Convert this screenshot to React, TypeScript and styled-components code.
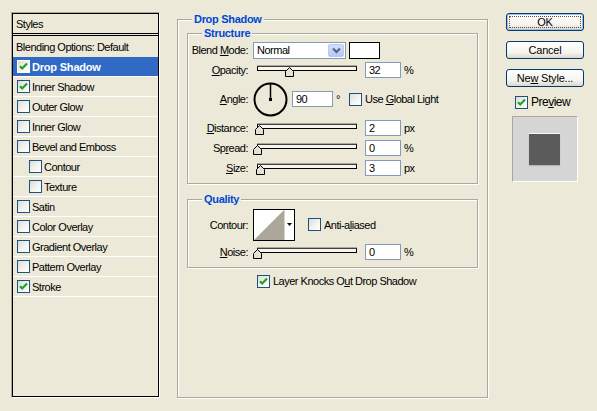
import React from 'react';
import styled, { createGlobalStyle } from 'styled-components';

// ============================================================
// GLOBAL
// ============================================================

const GlobalStyle = createGlobalStyle`
  * { box-sizing: border-box; }
  html, body {
    margin: 0;
    padding: 0;
    background: #ece9d8;
  }
  body {
    font-family: "Liberation Sans", Arial, sans-serif;
    font-size: 11px;
    letter-spacing: -0.5px;
    color: #000;
  }
  u { text-underline-offset: 1px; }
`;

// ============================================================
// STYLED COMPONENTS
// ============================================================

const Dialog = styled.div`
  display: flex;
  align-items: flex-start;
  width: 597px;
  height: 411px;
  padding: 12px 0 0 11px;
  background: #ece9d8;
`;

/* ---- styles list ---- */

const StylesPanel = styled.div`
  display: flex;
  width: 149px;
  height: 386px;
  border: 1px solid;
  border-color: #aca899 #fff #fff #aca899;
`;

const StylesInner = styled.div`
  flex: 1;
  display: flex;
  flex-direction: column;
  border: 1px solid #000;
`;

const PanelHeader = styled.div`
  height: 22px;
  padding: 4px 0 0 3px;
  border-bottom: 3px double #000;
`;

const BlendingRow = styled.div`
  display: flex;
  align-items: center;
  height: 21px;
  padding-left: 3px;
`;

const StyleItem = styled.div<{ $selected?: boolean; $indent?: boolean }>`
  display: flex;
  align-items: center;
  gap: 2px;
  height: 20px;
  padding-left: ${({ $indent }) => ($indent ? 16 : 4)}px;
  border-bottom: 1px solid #fff;
  background: ${({ $selected }) => ($selected ? '#316ac5' : 'transparent')};
  color: ${({ $selected }) => ($selected ? '#fff' : '#000')};
  font-weight: ${({ $selected }) => ($selected ? 'bold' : 'normal')};
  letter-spacing: ${({ $selected }) => ($selected ? '-0.2px' : 'inherit')};
`;

/* ---- checkbox ---- */

const CheckBoxBox = styled.span<{ $light?: boolean }>`
  display: inline-flex;
  align-items: center;
  justify-content: center;
  flex: none;
  width: 13px;
  height: 13px;
  border: 1px solid ${({ $light }) => ($light ? '#fff' : '#1c5180')};
  background: linear-gradient(135deg, #dcdcd7 0%, #f3f3ef 55%, #fff 100%);
`;

/* ---- group boxes ---- */

const GroupBox = styled.fieldset<{ $w?: number; $h?: number; $pad?: number }>`
  margin: 0;
  min-width: 0;
  width: ${({ $w }) => ($w ? `${$w}px` : 'auto')};
  height: ${({ $h }) => ($h ? `${$h}px` : 'auto')};
  padding: 0 ${({ $pad }) => $pad ?? 0}px 5px;
  border: 1px solid #aca899;
  box-shadow: 1px 1px 0 #fff, inset 1px 1px 0 #fff;
`;

const OuterGroup = styled(GroupBox)`
  margin-left: 17px;
  padding-bottom: 0;
`;

const InnerGroup = styled(GroupBox)<{ $gap?: number }>`
  margin-top: ${({ $gap }) => $gap ?? 0}px;
`;

const GroupTitle = styled.legend<{ $indent: number }>`
  margin-left: ${({ $indent }) => $indent}px;
  padding: 0 2px;
  line-height: 14px;
  font-weight: bold;
  letter-spacing: -0.3px;
  color: #0046d5;
  background: #ece9d8;
`;

/* ---- form rows ---- */

const FieldRow = styled.div<{ $h?: number; $top?: number }>`
  display: grid;
  grid-template-columns: 60px 1fr;
  column-gap: 5px;
  align-items: center;
  height: ${({ $h }) => $h ?? 20}px;
  margin-top: ${({ $top }) => $top ?? 0}px;
`;

const FieldLabel = styled.label`
  text-align: right;
  white-space: nowrap;
`;

const Controls = styled.div`
  display: flex;
  align-items: center;
`;

const SelectBox = styled.div`
  display: flex;
  align-items: center;
  width: 93px;
  height: 17px;
  padding: 1px 1px 1px 3px;
  border: 1px solid #7f9db9;
  background: #fff;
`;

const SelectText = styled.span`
  flex: 1;
`;

const SelectArrow = styled.span`
  display: flex;
  align-items: center;
  justify-content: center;
  width: 16px;
  height: 13px;
  border-radius: 2px;
  background: linear-gradient(#d2defa, #b5c8f4);
  border: 1px solid #b9c9ef;
`;

const ColorSwatch = styled.div`
  width: 31px;
  height: 17px;
  margin-left: 3px;
  border: 1px solid #000;
  background: #fff;
`;

const SliderBox = styled.div`
  position: relative;
  width: 104px;
  height: 13px;
  padding: 2px 0 0 4px;
`;

const SliderTrack = styled.div`
  width: 100px;
  height: 5px;
  border: 1px solid #000;
  border-top-color: #404040;
  background: #f6f5ee;
  box-shadow: 0 -1px 0 #aca899;
`;

const SliderThumb = styled.svg`
  position: absolute;
  top: 3px;
`;

const NumberField = styled.div<{ $w?: number; $gap?: number }>`
  display: flex;
  align-items: center;
  width: ${({ $w }) => $w ?? 36}px;
  height: 16px;
  margin-left: ${({ $gap }) => $gap ?? 8}px;
  padding-left: 3px;
  border: 1px solid #7f9db9;
  background: #fff;
`;

const Unit = styled.span<{ $w?: number }>`
  margin-left: 3px;
  width: ${({ $w }) => ($w ? `${$w}px` : 'auto')};
`;

const InlineCheck = styled.div<{ $gap?: number }>`
  display: flex;
  align-items: center;
  gap: 3px;
  margin-left: ${({ $gap }) => $gap ?? 0}px;
`;

const ContourPicker = styled.div`
  display: flex;
  width: 42px;
  height: 32px;
  border: 1px solid #000;
  background: #fff;
`;

const ContourArrow = styled.div`
  flex: 1;
  display: flex;
  align-items: center;
  justify-content: center;
  border-left: 1px solid #d8d6cc;
`;

const KnockoutRow = styled.div`
  display: flex;
  align-items: center;
  gap: 3px;
  height: 20px;
  margin-top: 3px;
  padding-left: 70px;
`;

/* ---- right column ---- */

const ButtonColumn = styled.div`
  display: flex;
  flex-direction: column;
  width: 78px;
  margin: 1px 0 0 18px;
`;

const PushButton = styled.button<{ $default?: boolean }>`
  width: 78px;
  height: 18px;
  margin: 0 0 10px;
  padding: 0;
  font: inherit;
  letter-spacing: -0.2px;
  color: #000;
  border: 1px solid #003c74;
  border-radius: 3px;
  background: linear-gradient(#fff 0%, #f5f4ef 65%, #dcd7cb 100%);
  box-shadow: ${({ $default }) => ($default ? 'inset 0 0 0 1px #a3bde6' : 'none')};
  outline: ${({ $default }) => ($default ? '1px dotted #6b4a36' : 'none')};
  outline-offset: -4px;
`;

const PreviewToggle = styled.div`
  display: flex;
  align-items: center;
  gap: 3px;
  height: 16px;
  margin: -3px 0 0 9px;
  font-size: 12px;
`;

const PreviewFrame = styled.div`
  display: flex;
  align-items: center;
  justify-content: center;
  width: 66px;
  height: 66px;
  margin: 6px 0 0 6px;
  border: 1px solid;
  border-color: #aca899 #fff #fff #aca899;
  background: #d6d6d6;
`;

const PreviewSwatch = styled.div`
  width: 31px;
  height: 31px;
  margin: 1px 1px 0 0;
  background: #5b5b5b;
  box-shadow: 0 -1px 0 #f6f6f6, 0 1px 1px rgba(0, 0, 0, 0.15);
`;

// ============================================================
// SMALL PARTS
// ============================================================

function CheckBox({ checked, light }: { checked?: boolean; light?: boolean }) {
  return (
    <CheckBoxBox $light={light}>
      {checked && (
        <svg width="9" height="9" viewBox="0 0 9 9">
          <path d="M1 4.2l2.2 2.3L8 1.6" stroke="#21a121" strokeWidth="2.2" fill="none" />
        </svg>
      )}
    </CheckBoxBox>
  );
}

function Slider({ value }: { value: number }) {
  return (
    <SliderBox>
      <SliderTrack />
      <SliderThumb width="9" height="10" viewBox="0 0 9 10" style={{ left: value }}>
        <polygon points="4.5,0.5 8.5,4.5 8.5,9.5 0.5,9.5 0.5,4.5" fill="#e4e1d2" stroke="#000" />
      </SliderThumb>
    </SliderBox>
  );
}

function SliderField({ label, value, unit }: { label: React.ReactNode; value: number; unit: string }) {
  return (
    <FieldRow>
      <FieldLabel>{label}</FieldLabel>
      <Controls>
        <Slider value={value} />
        <NumberField>{value}</NumberField>
        <Unit>{unit}</Unit>
      </Controls>
    </FieldRow>
  );
}

const styleItems: { name: string; checked?: boolean; selected?: boolean; indent?: boolean }[] = [
  { name: 'Drop Shadow', checked: true, selected: true },
  { name: 'Inner Shadow', checked: true },
  { name: 'Outer Glow' },
  { name: 'Inner Glow' },
  { name: 'Bevel and Emboss' },
  { name: 'Contour', indent: true },
  { name: 'Texture', indent: true },
  { name: 'Satin' },
  { name: 'Color Overlay' },
  { name: 'Gradient Overlay' },
  { name: 'Pattern Overlay' },
  { name: 'Stroke', checked: true },
];

// ============================================================
// COMPONENT
// ============================================================

export default function App() {
  return (
    <>
      <GlobalStyle />
      <Dialog>
        <StylesPanel>
          <StylesInner>
            <PanelHeader>Styles</PanelHeader>
            <BlendingRow>Blending Options: Default</BlendingRow>
            {styleItems.map((item) => (
              <StyleItem key={item.name} $selected={item.selected} $indent={item.indent}>
                <CheckBox checked={item.checked} light={item.selected} />
                {item.name}
              </StyleItem>
            ))}
          </StylesInner>
        </StylesPanel>

        <OuterGroup $w={311} $h={386} $pad={9}>
          <GroupTitle $indent={5}>Drop Shadow</GroupTitle>

          <InnerGroup>
            <GroupTitle $indent={14}>Structure</GroupTitle>

            <FieldRow>
              <FieldLabel>
                Blend <u>M</u>ode:
              </FieldLabel>
              <Controls>
                <SelectBox>
                  <SelectText>Normal</SelectText>
                  <SelectArrow>
                    <svg width="9" height="7" viewBox="0 0 9 7">
                      <path d="M1 1.5l3.5 3.5L8 1.5" stroke="#4d6185" strokeWidth="2" fill="none" />
                    </svg>
                  </SelectArrow>
                </SelectBox>
                <ColorSwatch />
              </Controls>
            </FieldRow>

            <SliderField
              label={
                <>
                  <u>O</u>pacity:
                </>
              }
              value={32}
              unit="%"
            />

            <FieldRow $h={38}>
              <FieldLabel>
                <u>A</u>ngle:
              </FieldLabel>
              <Controls>
                <svg width="35" height="35" viewBox="0 0 35 35">
                  <circle cx="17.5" cy="17.5" r="16" stroke="#000" strokeWidth="2" fill="none" />
                  <line x1="17.5" y1="17.5" x2="17.5" y2="2" stroke="#000" strokeWidth="1.5" />
                  <rect x="16" y="16" width="3" height="3" fill="#000" />
                </svg>
                <NumberField $w={41} $gap={4}>90</NumberField>
                <Unit $w={13}>°</Unit>
                <InlineCheck>
                  <CheckBox />
                  <span>
                    Use <u>G</u>lobal Light
                  </span>
                </InlineCheck>
              </Controls>
            </FieldRow>

            <SliderField
              label={
                <>
                  <u>D</u>istance:
                </>
              }
              value={2}
              unit="px"
            />
            <SliderField
              label={
                <>
                  Sp<u>r</u>ead:
                </>
              }
              value={0}
              unit="%"
            />
            <SliderField
              label={
                <>
                  <u>S</u>ize:
                </>
              }
              value={3}
              unit="px"
            />
          </InnerGroup>

          <InnerGroup $gap={8}>
            <GroupTitle $indent={14}>Quality</GroupTitle>

            <FieldRow $h={35} $top={1}>
              <FieldLabel>Contour:</FieldLabel>
              <Controls>
                <ContourPicker>
                  <svg width="30" height="30" viewBox="0 0 30 30">
                    <polygon points="0,30 30,0 30,30" fill="#aca899" />
                  </svg>
                  <ContourArrow>
                    <svg width="5" height="3" viewBox="0 0 5 3">
                      <polygon points="0,0 5,0 2.5,3" fill="#000" />
                    </svg>
                  </ContourArrow>
                </ContourPicker>
                <InlineCheck $gap={13}>
                  <CheckBox />
                  <span>
                    Anti-a<u>l</u>iased
                  </span>
                </InlineCheck>
              </Controls>
            </FieldRow>

            <SliderField
              label={
                <>
                  <u>N</u>oise:
                </>
              }
              value={0}
              unit="%"
            />
          </InnerGroup>

          <KnockoutRow>
            <CheckBox checked />
            <span>
              Layer Knocks O<u>u</u>t Drop Shadow
            </span>
          </KnockoutRow>
        </OuterGroup>

        <ButtonColumn>
          <PushButton $default>OK</PushButton>
          <PushButton>Cancel</PushButton>
          <PushButton>
            Ne<u>w</u> Style...
          </PushButton>
          <PreviewToggle>
            <CheckBox checked />
            <span>
              Pre<u>v</u>iew
            </span>
          </PreviewToggle>
          <PreviewFrame>
            <PreviewSwatch />
          </PreviewFrame>
        </ButtonColumn>
      </Dialog>
    </>
  );
}
